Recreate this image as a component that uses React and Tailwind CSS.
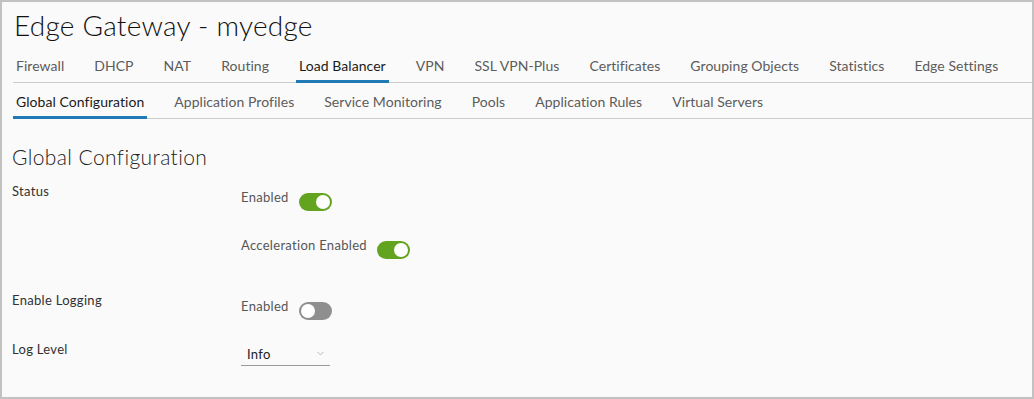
import { ChevronDown } from "lucide-react";

const TOP_TABS = ["Firewall", "DHCP", "NAT", "Routing", "Load Balancer", "VPN", "SSL VPN-Plus", "Certificates", "Grouping Objects", "Statistics", "Edge Settings"];
const SUB_TABS = ["Global Configuration", "Application Profiles", "Service Monitoring", "Pools", "Application Rules", "Virtual Servers"];

function Tabs({ items, active }) {
  return (
    <div className="ml-[11px] flex h-[36px] gap-6 border-b border-[#cccccc] text-[14px] tracking-[0.05px]">
      {items.map((t) => (
        <div
          key={t}
          className={
            t === active
              ? "-mb-px flex items-center border-b-[3px] border-[#1f7ab5] px-[3px] pt-[4px] text-[#1a1a1a]"
              : "flex items-center px-[3px] pt-px text-[#5c5c5c]"
          }
        >
          {t}
        </div>
      ))}
    </div>
  );
}

function Toggle({ on }) {
  return (
    <div
      className={`mt-[5px] flex h-[18px] w-[33px] items-center rounded-full px-[2px] ${
        on ? "justify-end bg-[#62a420]" : "justify-start bg-[#8f8f8f]"
      }`}
    >
      <div className="h-[14px] w-[14px] rounded-full bg-white" />
    </div>
  );
}

function Switch({ label, on }) {
  return (
    <div className="flex items-start gap-[10px]">
      <span className="leading-[18px] text-[#565656]">{label}</span>
      <Toggle on={on} />
    </div>
  );
}

export default function App() {
  return (
    <div
      className="h-[399px] w-[1034px] overflow-hidden border-2 border-[#c2c2c2] bg-[#fafafa] text-[13px] tracking-[0.3px]"
      style={{ fontFamily: "Lato, 'Noto Sans', sans-serif" }}
    >
      <div className="flex h-[45px] items-center pl-[12px] text-[28px] font-light tracking-[0.25px] text-[#111]">
        Edge Gateway - myedge
      </div>
      <Tabs items={TOP_TABS} active="Load Balancer" />
      <Tabs items={SUB_TABS} active="Global Configuration" />

      <div className="pl-[10px]">
        <h2 className="mt-[26px] text-[21px] font-light leading-[24px] tracking-[0.4px] text-[#222]">Global Configuration</h2>

        <div className="mt-[13px] flex">
          <div className="w-[229px] leading-[18px] text-[#313131]">Status</div>
          <div className="flex flex-col gap-[25px] pt-[6px]">
            <Switch label="Enabled" on />
            <Switch label="Acceleration Enabled" on />
          </div>
        </div>

        <div className="mt-[32px] flex">
          <div className="w-[229px] leading-[18px] text-[#313131]">Enable Logging</div>
          <div className="pt-[6px]">
            <Switch label="Enabled" on={false} />
          </div>
        </div>

        <div className="mt-[20px] flex">
          <div className="w-[229px] leading-[18px] text-[#313131]">Log Level</div>
          <div className="mt-[5px] flex h-[21px] w-[89px] items-start justify-between border-b border-[#9a9a9a] pl-[6px] pr-[4px]">
            <span className="leading-[18px] text-[#222]">Info</span>
            <ChevronDown size={11} className="mt-[3px] text-[#9a9a9a]" strokeWidth={1.5} />
          </div>
        </div>
      </div>
    </div>
  );
}
